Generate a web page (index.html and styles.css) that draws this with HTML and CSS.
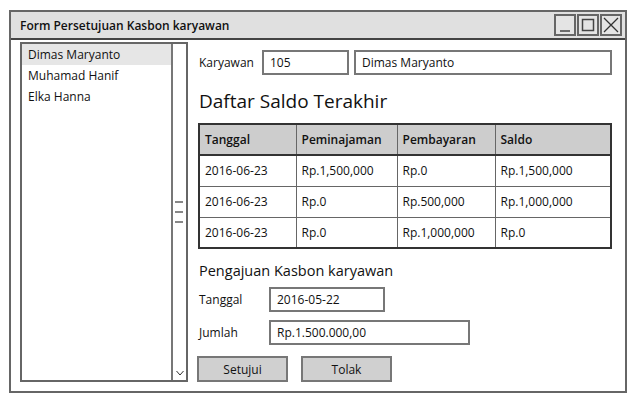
FILE: index.html
```html
<!DOCTYPE html>
<html>
<head>
<meta charset="utf-8">
<link rel="stylesheet" href="styles.css">
</head>
<body>
<div class="window">
  <div class="titlebar">
    <span class="title">Form Persetujuan Kasbon karyawan</span>
    <div class="controls">
      <span class="ctl"><svg width="18" height="18" viewBox="0 0 18 18"><line x1="4" y1="15" x2="14" y2="15" stroke="#444" stroke-width="1.5"/></svg></span>
      <span class="ctl"><svg width="18" height="18" viewBox="0 0 18 18"><rect x="3.5" y="3.5" width="11" height="11" fill="none" stroke="#444" stroke-width="1.5"/></svg></span>
      <span class="ctl"><svg width="18" height="18" viewBox="0 0 18 18"><path d="M2 2 L16 16 M16 2 L2 16" stroke="#333" stroke-width="1.3"/></svg></span>
    </div>
  </div>
  <div class="content">
    <div class="list">
      <div class="items">
        <div class="item sel">Dimas Maryanto</div>
        <div class="item">Muhamad Hanif</div>
        <div class="item">Elka Hanna</div>
      </div>
      <div class="scroll">
        <div class="thumb"><span></span><span></span><span></span></div>
        <svg class="down" width="10" height="8" viewBox="0 0 10 8"><path d="M1.5 2 L5 6 L8.5 2" fill="none" stroke="#333" stroke-width="1"/></svg>
      </div>
    </div>
    <div class="main">
      <div class="row-karyawan">
        <span class="lbl">Karyawan</span>
        <div class="input in-id">105</div>
        <div class="input in-name">Dimas Maryanto</div>
      </div>
      <h1 class="h1">Daftar Saldo Terakhir</h1>
      <table class="grid">
        <thead>
          <tr><th class="c1">Tanggal</th><th class="c2">Peminajaman</th><th class="c3">Pembayaran</th><th class="c4">Saldo</th></tr>
        </thead>
        <tbody>
          <tr><td>2016-06-23</td><td>Rp.1,500,000</td><td>Rp.0</td><td>Rp.1,500,000</td></tr>
          <tr><td>2016-06-23</td><td>Rp.0</td><td>Rp.500,000</td><td>Rp.1,000,000</td></tr>
          <tr><td>2016-06-23</td><td>Rp.0</td><td>Rp.1,000,000</td><td>Rp.0</td></tr>
        </tbody>
      </table>
      <h2 class="h2">Pengajuan Kasbon karyawan</h2>
      <div class="frow first">
        <span class="flbl">Tanggal</span>
        <div class="input in-date">2016-05-22</div>
      </div>
      <div class="frow">
        <span class="flbl">Jumlah</span>
        <div class="input in-amt">Rp.1.500.000,00</div>
      </div>
      <div class="buttons">
        <div class="btn">Setujui</div>
        <div class="btn">Tolak</div>
      </div>
    </div>
  </div>
</div>
</body>
</html>
```
FILE: styles.css
```css
* { box-sizing: border-box; }
html, body { margin: 0; padding: 0; background: #fff; }
body {
  padding: 10px 10px 10px 9px;
  font-family: "Open Sans", "DejaVu Sans", sans-serif;
  font-size: 12px;
  color: #111;
}
.window {
  width: 618px;
  height: 383px;
  border: 2px solid #666;
  display: flex;
  flex-direction: column;
}
.titlebar {
  height: 28px;
  background: #e0e0e0;
  border-bottom: 2px solid #444;
  display: flex;
  align-items: center;
  justify-content: space-between;
  padding: 0 3px 0 9px;
}
.title { font-weight: 600; font-size: 12px; }
.controls { display: flex; gap: 1px; }
.ctl {
  width: 22px; height: 22px;
  border: 2px solid #666;
  display: flex; align-items: center; justify-content: center;
  background: #e4e4e4;
}
.content {
  flex: 1;
  display: flex;
  padding: 2px 13px 9px 9px;
  gap: 9px;
}
.list {
  width: 168px;
  border: 2px solid #666;
  display: flex;
}
.items { flex: 1; }
.item { height: 21px; line-height: 21px; padding-left: 6px; }
.item.sel { background: #e6e6e6; }
.scroll {
  width: 15px;
  border-left: 2px solid #777;
  position: relative;
}
.thumb {
  position: absolute;
  top: 157px;
  left: 2px;
  display: flex;
  flex-direction: column;
  gap: 8px;
}
.thumb span { display: block; width: 8px; height: 2px; background: #888; }
.down { position: absolute; bottom: 3px; left: 2px; }
.main { flex: 1; display: flex; flex-direction: column; }
.row-karyawan {
  display: flex; align-items: center;
  margin-top: 8px;
}
.lbl { width: 65px; padding-left: 2px; }
.input {
  height: 25px;
  border: 2px solid #777;
  padding-left: 6px;
  line-height: 21px;
  background: #fff;
}
.in-id { width: 87px; margin-right: 5px; }
.in-name { width: 258px; }
.h1 {
  font-size: 19px;
  font-weight: 400;
  margin: 14px 0 10px 2px;
  line-height: 24px;
}
.grid {
  border-collapse: collapse;
  width: 414px;
  margin-left: 1px;
  border: 2px solid #333;
}
.grid th, .grid td {
  border: 1px solid #666;
  height: 31px;
  text-align: left;
  padding: 0 0 0 5px;
  font-size: 12px;
}
.grid th { background: #cdcdcd; font-weight: 600; border-bottom: 2px solid #333; }
.c1 { width: 97px; } .c2 { width: 101px; } .c3 { width: 98px; }
.h2 {
  font-size: 14.5px; font-weight: 400;
  margin: 12px 0 0 2px;
  line-height: 20px;
}
.frow { display: flex; align-items: center; margin-top: 8px; }
.frow.first { margin-top: 6px; }
.flbl { width: 72px; padding-left: 2px; }
.in-date { width: 116px; }
.in-amt { width: 201px; }
.buttons { display: flex; gap: 13px; margin-top: 11px; }
.btn {
  width: 91px; height: 26px;
  background: #d0d0d0;
  border: 2px solid #777;
  display: flex; align-items: center; justify-content: center;
}
```
